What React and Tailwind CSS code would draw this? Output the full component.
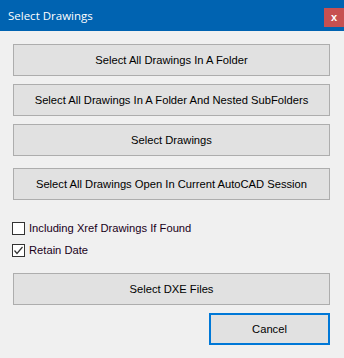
import React from "react";

const btn =
  "w-[317px] h-[32px] bg-[#e1e1e1] border border-[#adadad] flex items-center justify-center text-[11.2px] text-black";

export default function App() {
  return (
    <div
      className="w-[344px] h-[358px] bg-[#f0f0f0] flex flex-col overflow-hidden"
      style={{ fontFamily: '"Liberation Sans", Arial, sans-serif' }}
    >
      <div className="h-[31px] bg-[#0063b1] flex items-start justify-between shrink-0">
        <div
          className="text-white text-[11.5px] pl-[8px] pt-[8px] leading-[16px]"
          style={{ fontFamily: '"Open Sans", "Noto Sans", sans-serif' }}
        >
          Select Drawings
        </div>
        <div className="mt-[8px] w-[20px] h-[19px] bg-[#c75050] flex items-center justify-center text-white text-[11px] font-bold leading-none pb-[1px]">
          x
        </div>
      </div>
      <div className="flex flex-col pl-[13px] pt-[13px]">
        <div className={btn}>Select All Drawings In A Folder</div>
        <div className={btn + " mt-[8px]"}>Select All Drawings In A Folder And Nested SubFolders</div>
        <div className={btn + " mt-[8px]"}>Select Drawings</div>
        <div className={btn + " mt-[12px]"}>Select All Drawings Open In Current AutoCAD Session</div>
        <div className="flex items-center mt-[22px] h-[13px]">
          <div className="w-[13px] h-[13px] border border-[#333] bg-white -ml-[1px]" />
          <span className="ml-[4px] text-[11.2px] text-[#1a001a]">Including Xref Drawings If Found</span>
        </div>
        <div className="flex items-center mt-[9px] h-[13px]">
          <div className="w-[13px] h-[13px] border border-[#333] bg-white -ml-[1px] flex items-center justify-center">
            <svg width="11" height="11" viewBox="0 0 11 11">
              <path d="M1.5 5.5 L4 8.5 L9.5 2" fill="none" stroke="#333" strokeWidth="1.2" />
            </svg>
          </div>
          <span className="ml-[4px] text-[11.2px] text-[#1a001a]">Retain Date</span>
        </div>
        <div className={btn + " mt-[16px]"}>Select DXE Files</div>
        <div className="flex justify-end w-[317px] mt-[8px]">
          <div className="w-[121px] h-[32px] bg-[#e1e1e1] border-2 border-[#0078d7] flex items-center justify-center text-[11.2px] text-black">
            Cancel
          </div>
        </div>
      </div>
    </div>
  );
}
